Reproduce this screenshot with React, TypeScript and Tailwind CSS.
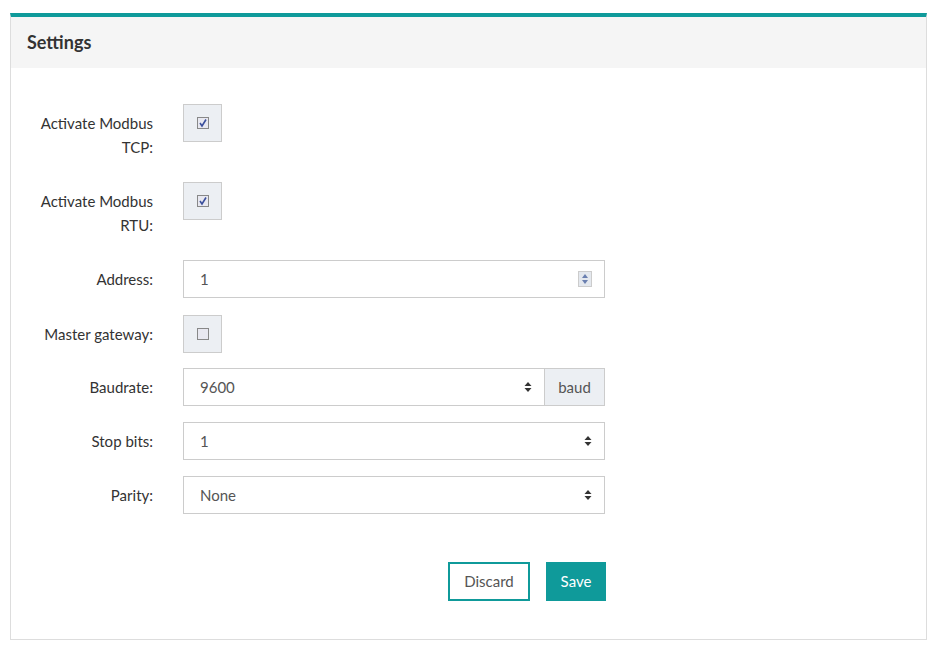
import React from "react";

const Check = ({ on }: { on: boolean }) => (
  <div className="w-[39px] h-[38px] bg-[#eceff3] border border-[#ccc] flex items-center justify-center">
    <div className="w-[12px] h-[12px] border border-[#888] bg-[#e8e8f0] flex items-center justify-center">
      {on && (
        <svg width="10" height="10" viewBox="0 0 10 10"><path d="M2 5 L4 8 L8 1.5" stroke="#3b4f9c" strokeWidth="1.6" fill="none" /></svg>
      )}
    </div>
  </div>
);

const Arrows = () => (
  <svg width="8" height="12" viewBox="0 0 8 12"><path d="M4 1 L7.5 5 H0.5Z M4 11 L7.5 7 H0.5Z" fill="#333" /></svg>
);

const Row = ({ label, children, cls }: { label: React.ReactNode; children: React.ReactNode; cls: string }) => (
  <div className={`flex ${cls}`}>
    <div className="w-[142px] text-right text-[15px] leading-[24px] text-[#333] pt-[7px]">{label}</div>
    <div className="ml-[30px]">{children}</div>
  </div>
);

const Select = ({ value, w = "w-[422px]" }: { value: string; w?: string }) => (
  <div className={`${w} h-[38px] border border-[#ccc] bg-white flex items-center justify-between pl-[16px] pr-[12px] text-[15px] text-[#555]`}>
    <span>{value}</span><Arrows />
  </div>
);

export default function App() {
  return (
    <div className="w-[940px] h-[652px] bg-white pt-[13px] px-[10px]" style={{ fontFamily: "Lato, 'Open Sans', sans-serif" }}>
      <div className="w-[917px] h-[627px] border-x border-b border-[#ddd] border-t-[4px] border-t-[#0f9a9a]">
        <div className="h-[51px] bg-[#f5f5f5] flex items-center px-[16px] text-[18px] font-bold text-[#333]">Settings</div>
        <Row cls="mt-[36px] h-[78px]" label={<>Activate Modbus<br />TCP:</>}><Check on /></Row>
        <Row cls="h-[78px]" label={<>Activate Modbus<br />RTU:</>}><Check on /></Row>
        <Row cls="h-[55px]" label="Address:">
          <div className="w-[422px] h-[38px] border border-[#ccc] flex items-center justify-between pl-[16px] pr-[12px] text-[15px] text-[#555]">
            <span>1</span>
            <div className="w-[14px] h-[16px] bg-[#e4e8ee] border border-[#ccc] flex flex-col items-center justify-center gap-[2px]">
              <svg width="6" height="4"><path d="M3 0 L6 4 H0Z" fill="#6a7fb0" /></svg>
              <svg width="6" height="4"><path d="M3 4 L6 0 H0Z" fill="#6a7fb0" /></svg>
            </div>
          </div>
        </Row>
        <Row cls="h-[53px]" label="Master gateway:"><Check on={false} /></Row>
        <Row cls="h-[54px]" label="Baudrate:">
          <div className="flex">
            <Select value="9600" w="w-[362px]" />
            <div className="w-[60px] h-[38px] bg-[#eceff3] border border-[#ccc] border-l-0 flex items-center justify-center text-[15px] text-[#555]">baud</div>
          </div>
        </Row>
        <Row cls="h-[54px]" label="Stop bits:"><Select value="1" /></Row>
        <Row cls="h-[54px]" label="Parity:"><Select value="None" /></Row>
        <div className="flex justify-start mt-[32px] pl-[437px] gap-[16px]">
          <button className="w-[82px] h-[39px] border-2 border-[#0f9a9a] text-[15px] text-[#555] bg-white">Discard</button>
          <button className="w-[60px] h-[39px] bg-[#0f9a9a] text-[15px] text-white">Save</button>
        </div>
      </div>
    </div>
  );
}
